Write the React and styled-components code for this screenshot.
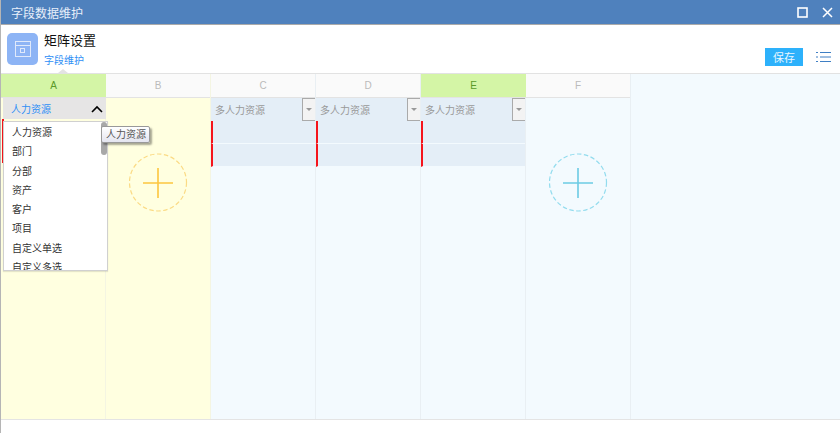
import styled, { createGlobalStyle } from 'styled-components';

const GlobalStyle = createGlobalStyle`
    html, body {
        margin: 0;
        padding: 0;
        background: #fff;
    }
    body {
        font-family: "Liberation Sans", "Noto Sans CJK SC", sans-serif;
        font-size: 12px;
    }
`;

const options = ['人力资源', '部门', '分部', '资产', '客户', '项目', '自定义单选', '自定义多选'];

const columns = [
    { key: 'A', active: true, tone: 'yellow', open: true },
    { key: 'B', tone: 'yellow', plus: true },
    { key: 'C', tone: 'blue', field: true },
    { key: 'D', tone: 'blue', field: true },
    { key: 'E', active: true, tone: 'blue', field: true },
    { key: 'F', tone: 'blue', plus: true },
];

function PlusCircle({ color, ring }) {
    return (
        <PlusSvg width="60" height="60" viewBox="0 0 60 60">
            <circle cx="30" cy="29.5" r="28.5" fill="none" stroke={ring} strokeWidth="1.2" strokeDasharray="4.5 2.5" />
            <path d="M15 30H45M30 15V45" fill="none" stroke={color} strokeWidth="1.6" />
        </PlusSvg>
    );
}

function App() {
    return (
        <Page>
            <GlobalStyle />
            <TitleBar>
                <TitleText>字段数据维护</TitleText>
                <WindowButtons>
                    <svg width="11" height="11" viewBox="0 0 11 11">
                        <rect x="1" y="1" width="9" height="9" fill="none" stroke="#fff" strokeWidth="1.6" />
                    </svg>
                    <svg width="11" height="11" viewBox="0 0 11 11">
                        <path d="M1 1L10 10M10 1L1 10" fill="none" stroke="#fff" strokeWidth="1.5" />
                    </svg>
                </WindowButtons>
            </TitleBar>

            <Header>
                <Logo>
                    <svg width="18" height="18" viewBox="0 0 18 18" fill="none" stroke="#dfe9fb" strokeWidth="1">
                        <rect x="1.5" y="1.5" width="15" height="15" />
                        <path d="M1.5 5.5H16.5" />
                        <rect x="6.5" y="8.5" width="4" height="4" />
                    </svg>
                </Logo>
                <Titles>
                    <MainTitle>矩阵设置</MainTitle>
                    <SubTitle>字段维护</SubTitle>
                </Titles>
                <Actions>
                    <SaveButton>保存</SaveButton>
                    <svg width="15" height="12" viewBox="0 0 15 12" fill="none" stroke="#3f7fc4" strokeWidth="1">
                        <path d="M0 1.5H2M4 1.5H15M0 6H2M4 6H15M0 10.5H2M4 10.5H15" />
                    </svg>
                </Actions>
                <Caret />
            </Header>

            <Grid>
                {columns.map((col) => (
                    <Column key={col.key} $tone={col.tone}>
                        <ColumnHead $active={col.active}>{col.key}</ColumnHead>
                        {col.open && (
                            <>
                                <OpenSelect>
                                    人力资源
                                    <svg width="12" height="8" viewBox="0 0 12 8">
                                        <path d="M1 7L6 2L11 7" fill="none" stroke="#000" strokeWidth="1.6" />
                                    </svg>
                                </OpenSelect>
                                <RedRow />
                                <DropList>
                                    {options.map((o) => (
                                        <DropItem key={o}>{o}</DropItem>
                                    ))}
                                    <ScrollThumb />
                                </DropList>
                                <Tip>人力资源</Tip>
                            </>
                        )}
                        {col.field && (
                            <>
                                <FieldRow>
                                    多人力资源
                                    <ArrowBox />
                                </FieldRow>
                                <DataRow />
                                <DataRow />
                            </>
                        )}
                        {col.plus && (
                            <PlusSlot>
                                {col.tone === 'yellow'
                                    ? <PlusCircle color="#fdc63f" ring="#fbdb85" />
                                    : <PlusCircle color="#6ccbe4" ring="#93dcee" />}
                            </PlusSlot>
                        )}
                    </Column>
                ))}
                <Rest />
            </Grid>
        </Page>
    );
}

export default App;

const Page = styled.div`
    width: 840px;
    height: 433px;
    display: flex;
    flex-direction: column;
    overflow: hidden;
    background: #fff;
    border-left: 1px solid #b5b5b5;
    box-sizing: border-box;
`;

const TitleBar = styled.div`
    height: 24px;
    margin-left: -1px;
    flex: none;
    display: flex;
    align-items: center;
    justify-content: space-between;
    padding: 0 7px 0 11px;
    background: #4f81bd;
    border-bottom: 1px solid #aaa;
`;

const TitleText = styled.span`
    color: #e8effa;
    font-size: 12px;
`;

const WindowButtons = styled.div`
    display: flex;
    align-items: center;
    gap: 14px;
`;

const Header = styled.div`
    position: relative;
    height: 48px;
    flex: none;
    display: flex;
    align-items: center;
    padding: 0 8px 0 6px;
    background: #fff;
`;

const Logo = styled.div`
    width: 31px;
    height: 32px;
    border-radius: 5px;
    background: #8db4f5;
    display: flex;
    align-items: center;
    justify-content: center;
`;

const Titles = styled.div`
    margin-left: 6px;
    display: flex;
    flex-direction: column;
    gap: 6px;
    padding-top: 2px;
`;

const MainTitle = styled.div`
    font-size: 13px;
    line-height: 16px;
    color: #111;
`;

const SubTitle = styled.div`
    font-size: 10px;
    line-height: 12px;
    color: #2f8ff5;
`;

const Actions = styled.div`
    margin-left: auto;
    align-self: flex-end;
    padding: 0 1px 7px 0;
    display: flex;
    align-items: center;
    gap: 13px;
`;

const SaveButton = styled.button`
    width: 38px;
    height: 18px;
    padding: 0;
    border: 0;
    background: #2db1fb;
    color: #e8f6ff;
    font-family: inherit;
    font-size: 11px;
`;

const Caret = styled.div`
    position: absolute;
    left: 57px;
    bottom: 0;
    border-left: 5px solid transparent;
    border-right: 5px solid transparent;
    border-bottom: 4px solid #e3e3e3;
`;

const Grid = styled.div`
    height: 347px;
    flex: none;
    display: flex;
    border-top: 1px solid #e2e2e2;
    border-bottom: 1px solid #e4e4e4;
    box-sizing: border-box;
`;

const Column = styled.div`
    position: relative;
    width: 105px;
    flex: none;
    box-sizing: border-box;
    border-right: 1px solid ${(p) => (p.$tone === 'yellow' ? '#f4f5e2' : '#e9eff3')};
    background: ${(p) => (p.$tone === 'yellow' ? '#ffffe0' : '#f3fafe')};
    display: flex;
    flex-direction: column;
`;

const ColumnHead = styled.div`
    height: 24px;
    flex: none;
    margin-right: ${(p) => (p.$active ? '-1px' : '0')};
    box-sizing: border-box;
    border-bottom: 1px solid #e3e3e3;
    display: flex;
    align-items: center;
    justify-content: center;
    font-size: 10px;
    color: ${(p) => (p.$active ? '#5a9a2a' : '#bbb')};
    background: ${(p) => (p.$active ? '#d4f5a6' : '#fafafa')};
`;

const OpenSelect = styled.div`
    height: 21px;
    flex: none;
    margin: 0 -1px 0 2px;
    padding: 0 3px 0 8px;
    display: flex;
    align-items: center;
    justify-content: space-between;
    background: #e6e5e5;
    color: #2f8ff5;
    font-size: 10px;
`;

const RedRow = styled.div`
    width: 2px;
    height: 44px;
    margin-left: 1px;
    background: #f5141c;
`;

const DropList = styled.div`
    position: absolute;
    z-index: 2;
    left: 2px;
    top: 47px;
    width: 105px;
    height: 150px;
    box-sizing: border-box;
    overflow: hidden;
    padding-top: 1px;
    background: #fff;
    border: 1px solid #d0d0d0;
    box-shadow: 0 1px 1px rgba(0, 0, 0, 0.1);
`;

const DropItem = styled.div`
    height: 19.25px;
    line-height: 19px;
    padding-left: 8px;
    font-size: 10px;
    color: #333;
`;

const ScrollThumb = styled.div`
    position: absolute;
    right: 0;
    top: 0;
    width: 6px;
    height: 33px;
    border-radius: 3px;
    background: #a8a8a8;
`;

const Tip = styled.div`
    position: absolute;
    z-index: 3;
    left: 100px;
    top: 52px;
    height: 15px;
    padding: 0 3px 0 4px;
    line-height: 15px;
    white-space: nowrap;
    font-size: 10px;
    color: #555;
    background: linear-gradient(#fff, #e4e5f0);
    border: 1px solid #999;
    border-radius: 2px;
    box-shadow: 2px 2px 2px rgba(0, 0, 0, 0.35);
`;

const FieldRow = styled.div`
    position: relative;
    height: 23px;
    flex: none;
    padding-left: 4px;
    display: flex;
    align-items: center;
    background: #e4eef7;
    color: #999;
    font-size: 10px;
`;

const ArrowBox = styled.div`
    position: absolute;
    right: 0;
    top: 0;
    width: 13px;
    height: 23px;
    box-sizing: border-box;
    background: #f3f3f3;
    border: 1px solid #aaa;
    border-right: 0;

    &::after {
        content: "";
        position: absolute;
        left: 3px;
        top: 9px;
        border-left: 3px solid transparent;
        border-right: 3px solid transparent;
        border-top: 3px solid #999;
    }
`;

const DataRow = styled.div`
    height: 22px;
    flex: none;
    background: #e4eef7;
    border-left: 2px solid #f5141c;
    border-bottom: 1px solid #f3fafe;
`;

const PlusSlot = styled.div`
    display: flex;
    justify-content: center;
    padding-top: 55px;
`;

const PlusSvg = styled.svg`
    display: block;
`;

const Rest = styled.div`
    flex: 1;
    background: #f3fafe;
`;
